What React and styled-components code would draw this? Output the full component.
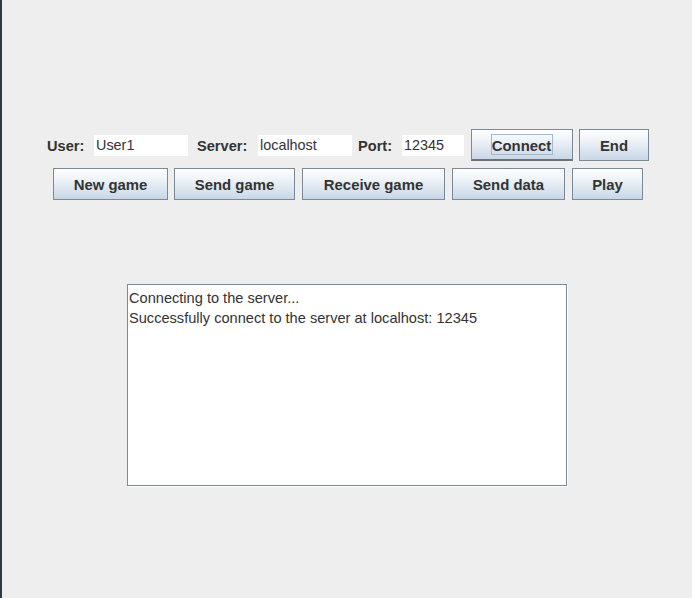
import React from "react";
import styled, { createGlobalStyle } from "styled-components";

const Global = createGlobalStyle`
  html, body { margin: 0; padding: 0; background: #eeeeee; }
  body { font-family: "Liberation Sans", Arial, sans-serif; }
`;

const Frame = styled.div`
  width: 692px;
  height: 598px;
  box-sizing: border-box;
  border-left: 2px solid #2c3b46;
  background: #eeeeee;
  display: flex;
  flex-direction: column;
  align-items: center;
  padding-top: 129px;
`;

const Row = styled.div`
  display: flex;
  align-items: center;
  height: 32px;
  margin-left: 2px;
  margin-bottom: ${(p) => p.$mb || 0}px;
`;

const Label = styled.span`
  width: ${(p) => p.$w}px;
  flex-shrink: 0;
  font-weight: bold;
  font-size: 14.6px;
  color: #333333;
  padding-top: 2px;
`;

const Field = styled.div`
  width: ${(p) => p.$w}px;
  flex-shrink: 0;
  height: 21px;
  box-sizing: border-box;
  background: #ffffff;
  font-size: 14.4px;
  color: #333333;
  padding-left: 2px;
  line-height: 21px;
  margin-right: ${(p) => p.$gap}px;
`;

const Button = styled.div`
  width: ${(p) => p.$w}px;
  flex-shrink: 0;
  height: 32px;
  box-sizing: border-box;
  border: 1px solid #7a8a99;
  border-bottom: ${(p) => (p.$pressed ? "2px solid #6d747b" : "1px solid #7a8a99")};
  background: linear-gradient(to bottom, #ffffff 0%, #f1f5f9 30%, #c8d7e6 100%);
  display: flex;
  align-items: center;
  justify-content: center;
  padding-top: ${(p) => (p.$pressed ? 0 : 2)}px;
  font-weight: bold;
  font-size: 14.9px;
  color: #333333;
  margin-right: ${(p) => p.$gap || 0}px;
`;

const Focus = styled.span`
  width: 62px;
  height: 21px;
  box-sizing: border-box;
  border: 1px solid #a3b8cc;
  display: inline-flex;
  align-items: center;
  justify-content: center;
  padding-top: 3px;
  margin-left: -1px;
  white-space: nowrap;
`;

const TextArea = styled.div`
  margin-top: 84px;
  width: 440px;
  height: 202px;
  box-sizing: border-box;
  border: 1px solid #7a8a99;
  box-shadow: 1px 1px 0 #ffffff;
  background: #ffffff;
  padding: 3px 0 0 1px;
  font-size: 14.6px;
  line-height: 20px;
  color: #333333;
`;

const Line = styled.div`
  white-space: nowrap;
`;

export default function App() {
  return (
    <>
      <Global />
      <Frame>
        <Row $mb={7}>
          <Label $w={47}>User:</Label>
          <Field $w={94} $gap={9}>User1</Field>
          <Label $w={61}>Server:</Label>
          <Field $w={94} $gap={6}>localhost</Field>
          <Label $w={44}>Port:</Label>
          <Field $w={62} $gap={7}>12345</Field>
          <Button $w={102} $gap={6} $pressed>
            <Focus>Connect</Focus>
          </Button>
          <Button $w={70}>End</Button>
        </Row>
        <Row>
          <Button $w={115} $gap={6}>New game</Button>
          <Button $w={121} $gap={7}>Send game</Button>
          <Button $w={143} $gap={7}>Receive game</Button>
          <Button $w={113} $gap={7}>Send data</Button>
          <Button $w={71}>Play</Button>
        </Row>
        <TextArea>
          <Line>Connecting to the server...</Line>
          <Line>Successfully connect to the server at localhost: 12345</Line>
        </TextArea>
      </Frame>
    </>
  );
}
